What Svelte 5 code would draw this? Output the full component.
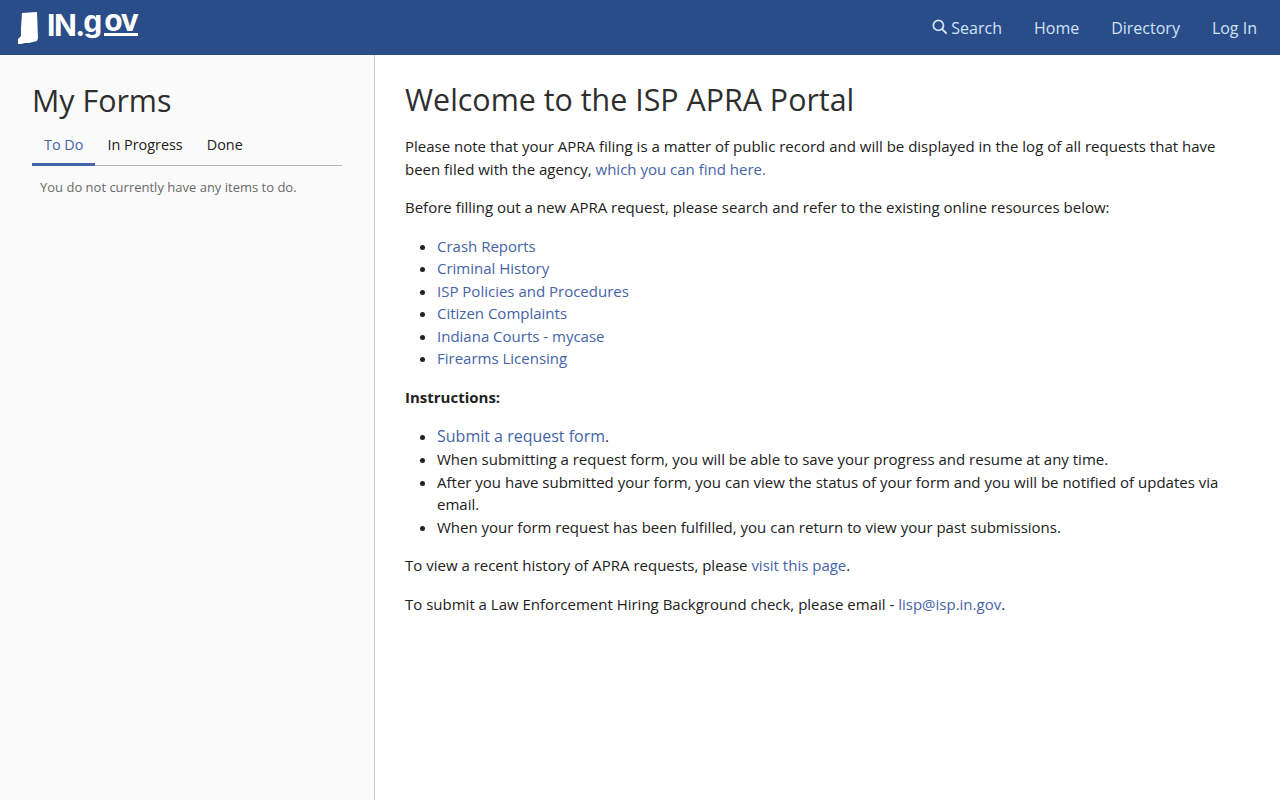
<script>
  const resources = ["Crash Reports", "Criminal History", "ISP Policies and Procedures", "Citizen Complaints", "Indiana Courts - mycase", "Firearms Licensing"];
</script>

<div class="page">
  <header class="top">
    <a class="logo" href="#home" aria-label="IN.gov">
      <svg class="state" viewBox="0 0 20 32" width="20" height="32" aria-hidden="true">
        <path d="M4 1 L19 0 L20 26 L19 29 L15 30 L11 31 L7 31 L3 32 L0 32 L0 27 L3 24 L3 16 Z" fill="#fff"/>
      </svg>
      <span class="in">IN</span><span class="dot">.</span><span class="g">g</span><span class="ov">ov</span>
    </a>
    <nav class="nav">
      <a href="#s" class="search">
        <svg viewBox="0 0 16 16" width="15" height="15" aria-hidden="true"><circle cx="6.8" cy="6.8" r="5.4" fill="none" stroke="currentColor" stroke-width="1.9"/><path d="M10.8 10.8 L15 15" stroke="currentColor" stroke-width="2.1" stroke-linecap="round"/></svg>
        Search</a>
      <a href="#h">Home</a>
      <a href="#d">Directory</a>
      <a href="#l">Log In</a>
    </nav>
  </header>
  <div class="body">
    <aside class="side">
      <h2>My Forms</h2>
      <div class="tabs">
        <a href="#t" class="tab active">To Do</a>
        <a href="#p" class="tab">In Progress</a>
        <a href="#n" class="tab">Done</a>
      </div>
      <p class="empty">You do not currently have any items to do.</p>
    </aside>
    <main class="main">
      <h1>Welcome to the ISP APRA Portal</h1>
      <p>Please note that your APRA filing is a matter of public record and will be displayed in the log of all requests that have been filed with the agency, <a href="#x">which you can find here.</a></p>
      <p>Before filling out a new APRA request, please search and refer to the existing online resources below:</p>
      <ul>
        {#each resources as r}
          <li><a href="#r">{r}</a></li>
        {/each}
      </ul>
      <p><strong>Instructions:</strong></p>
      <ul>
        <li class="tall"><a href="#f" class="big">Submit a request form</a>.</li>
        <li>When submitting a request form, you will be able to save your progress and resume at any time.</li>
        <li>After you have submitted your form, you can view the status of your form and you will be notified of updates via email.</li>
        <li>When your form request has been fulfilled, you can return to view your past submissions.</li>
      </ul>
      <p>To view a recent history of APRA requests, please <a href="#v">visit this page</a>.</p>
      <p>To submit a Law Enforcement Hiring Background check, please email - <a href="#m">lisp@isp.in.gov</a>.</p>
    </main>
  </div>
</div>

<style>
  :global(body) { margin: 0; font-family: "Open Sans", sans-serif; color: #212121; }
  a { text-decoration: none; color: #4464a8; }
  .page { height: 800px; display: flex; flex-direction: column; overflow: hidden; }
  .top { height: 55px; background: #2a4d89; display: flex; align-items: center; justify-content: space-between; padding: 0 23px 0 18px; flex: none; }
  .logo { display: flex; align-items: flex-start; height: 55px; width: 120px; color: #fff; font-family: Inter, sans-serif; font-weight: 700; }
  .logo span { color: #fff; }
  .state { margin-top: 12px; flex: none; }
  .in { font-size: 30px; line-height: 36px; margin: 7px 0 0 9px; letter-spacing: -1.5px; }
  .dot { font-size: 30px; line-height: 36px; margin: 7px 0 0 0; }
  .g { font-size: 30px; line-height: 29px; margin: 7px 0 0 -2px; }
  .ov { font-size: 30px; line-height: 25px; height: 25px; margin: 8px 0 0 2px; border-bottom: 3px solid #fff; letter-spacing: -1.3px; }
  .nav { display: flex; gap: 32px; }
  .nav a { color: #d2e0f5; font-size: 16px; line-height: 24px; display: flex; align-items: center; gap: 4px; }
  .search svg { position: relative; top: -1px; }
  .body { display: flex; flex: 1; min-height: 0; }
  .side { box-sizing: border-box; background: #fafafa; border-right: 1px solid #c8c8c8; flex: none; width: 375px; padding: 27px 32px 0; }
  h2 { font-size: 30.4px; font-weight: 400; line-height: 38px; margin: 0 0 7px; color: #2e2e2e; }
  .tabs { display: flex; width: 310px; border-bottom: 1px solid #b4b4bc; }
  .tab { font-size: 14.4px; line-height: 20px; padding: 8px 12px; color: #212121; margin-bottom: -1px; height: 20px; }
  .tab.active { color: #4464a8; border-bottom: 3px solid #4464a8; }
  .empty { font-size: 13px; color: #6a6a6a; margin: 11px 8px; line-height: 20px; }
  .main { flex: 1; padding: 25px 30px 0; font-size: 15px; line-height: 22.5px; }
  h1 { font-size: 30.4px; font-weight: 400; line-height: 40px; margin: 0 0 15px; color: #2e2e2e; }
  p { margin: 0 0 16px; }
  ul { margin: 0 0 16px; padding-left: 32px; }
  li { line-height: 22.5px; }
  li.tall { line-height: 24px; }
  .big { font-size: 16px; }
</style>
